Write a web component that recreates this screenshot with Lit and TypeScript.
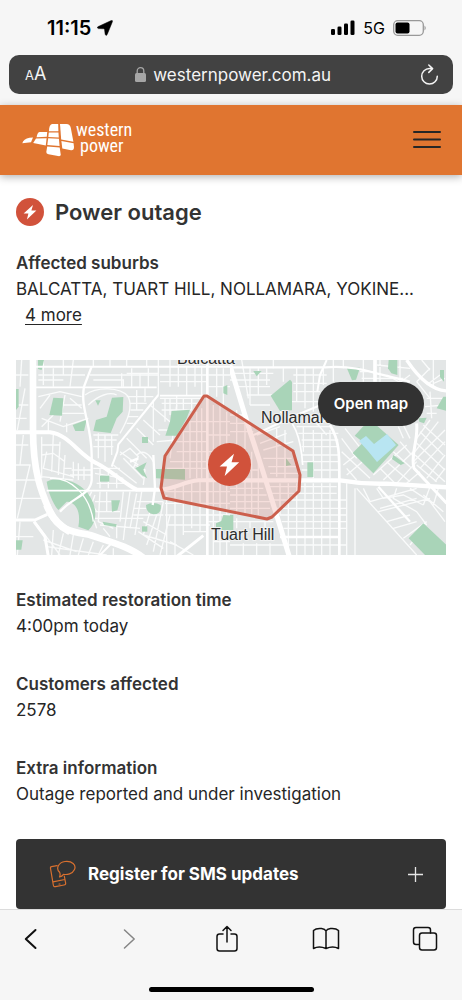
import { LitElement, html, svg, css } from "lit";
import { customElement } from "lit/decorators.js";

const bolt = "M17 7 L7.600 15.400 L12.400 15.400 L10.900 21.500 L20.400 12.500 L15.400 12.500 Z";

/* Street data is kept in two halves, each drawn at a third of its own units. */
type Road = [d: string, width: number];

const westMinor = [
  "M18 60 H55 M18 150 H55 M18 190 H50 M18 270 H55 M18 330 H62 M18 375 H80 M18 430 H95 M35 15 L30 95 M45 100 L22 225 M40 240 L30 330 M60 330 L22 490 M18 545 H70 M30 500 L22 600",
  "M85 60 H225 M100 15 V90 M130 40 V95 M160 15 V60 M190 15 L180 95 M85 75 H160 M85 125 L150 110 L215 125 M90 160 L120 120 M165 120 L150 200 M180 130 L215 160 M160 150 H215 M150 175 H222 M95 190 L160 215 L235 190 M95 215 L130 180 M115 230 V195 M170 232 V205",
  "M240 60 H445 M250 75 L340 75 L340 95 M335 55 V95 M365 40 V95 M390 55 V95 M415 40 V95 M445 15 V120 M350 55 H445 M250 15 V35 M300 15 V35 M350 15 V35 M410 15 V35",
  "M225 120 C260 95 330 95 355 125 C370 160 350 200 330 235 M235 150 C265 120 300 110 320 120 M350 125 H430 M360 145 H410 M362 165 H400 M355 185 H385 M350 205 H370 M380 105 V165 M405 100 V140 M250 240 H325 M255 255 H320 M250 275 H310 M265 235 V310 M285 240 V320 M305 240 V300",
  "M95 245 V370 M95 270 H150 M95 300 L130 295 L165 320 M110 290 L100 340 L190 365 M130 240 L125 350 M150 260 L145 360 M165 300 L160 370 M190 320 V370 M205 325 V375 M222 335 V375 M185 345 H245 M180 360 H245 M95 365 L190 375 M160 340 H185",
  "M250 340 H330 M255 355 L340 370 M260 385 H350 M270 340 V400 M295 345 V400 M320 355 V400 M310 330 L380 385 M340 310 L400 370 M330 290 L385 330 M350 250 L410 310 M380 220 L430 270 M400 195 L450 240 M420 150 L480 200 M430 135 V260 M330 300 L360 280 L385 305 L370 340 M380 300 C400 280 420 300 430 320 M375 330 L405 345 L400 390",
  "M450 130 H575 M455 145 H565 M455 165 H545 M465 130 V200 M480 130 V180 M500 120 V165 M520 130 V165 M545 130 V165 M450 60 H590 M450 80 H590 M480 15 V95 M505 15 V95 M530 35 V120 M555 15 V95 M575 35 V120 M595 60 H660 M595 95 H660 M620 40 V125 M640 40 V150",
  "M445 225 H500 M440 260 L500 255 M500 150 L480 310 M520 230 V370 M540 200 V370 M560 170 V370 M575 160 V370 M500 290 H590 M480 320 H590 M470 340 H590 M500 260 H590 M520 230 H590 M530 200 H590 M610 150 V600 M630 150 V600 M650 170 V600 M595 200 H660 M595 240 H660 M595 290 H660 M595 340 H660",
  "M470 420 V600 M495 400 V600 M520 390 V540 M545 385 V520 M570 380 V530 M465 410 H660 M465 445 H660 M465 480 H660 M470 510 H600 M520 530 H590 M480 560 L550 600 M610 560 H660 M595 500 H660",
  "M255 420 L240 460 L260 520 M270 410 L265 500 L310 520 M290 410 V470 M340 410 L330 500 M360 410 L345 510 M380 415 L360 520 M395 410 L375 540 M255 440 H310 M255 470 H330 M255 490 H400 M270 510 L390 520 M280 520 L300 545 M320 510 V550 M345 510 L340 555 M380 440 H460 M370 460 H410 M370 480 H460 M400 500 L470 540 M385 530 L460 580 M400 540 L500 570 M420 470 L400 540 M440 480 L410 570 M460 440 L430 590 M480 480 L450 600",
  "M75 500 L150 600 M100 555 L200 590 M130 525 L125 600 M160 535 L145 600 M190 540 L180 600 M220 550 L205 600 M250 560 L235 600 M280 570 L265 600 M310 580 V600 M110 575 L290 600 M100 410 V440 M85 395 L100 430 M245 410 L235 430 L260 470",
];

const westMajor: Road[] = [
  ["M68 35 H660", 6],
  ["M70 97 H440 M450 122 H590", 5],
  ["M245 35 L222 95 C210 160 245 210 245 300 V375 C242 420 190 425 150 470", 7],
  ["M445 120 L325 268 L322 290 L305 335", 6],
  ["M110 407 H380", 5],
  ["M120 370 C180 365 240 420 250 500", 4],
  ["M18 495 H75 L112 478", 9],
  ["M72 500 L105 545 L115 605", 9],
  ["M265 605 L310 560", 6],
  ["M500 605 L580 542", 9],
  ["M430 300 L435 400 L428 450 M360 320 L385 310", 7],
  ["M592 15 V605", 8],
  ["M15 232 H120 C180 240 205 300 260 325 C300 345 350 390 380 404 H450 C500 400 520 380 565 376 H665", 12],
  ["M110 450 C130 500 160 520 180 530", 22],
  ["M69 10 V215 C68 360 98 420 122 475 C150 530 200 532 240 540 C300 560 360 575 405 612", 20],
];

const westParks = [
  "M130 128 L160 130 L156 182 L118 180 Z",
  "M306 128 L340 126 L338 170 L320 190 L302 234 L250 228 L258 195 L290 185 Z",
  "M188 210 L230 194 L222 228 L196 228 Z",
  "M485 168 L540 164 L530 190 L500 242 L466 242 L480 200 Z",
  "M110 380 C150 362 215 380 240 425 C262 460 262 500 235 526 L205 515 C215 460 190 440 170 440 L145 465 C125 440 115 410 110 380 Z",
  "M438 342 H525 V374 L438 370 Z",
  "M376 340 L410 322 L400 345 L412 370 L395 360 Z",
  "M396 246 H414 V264 H396 Z",
  "M270 362 H298 V380 H270 Z",
  "M304 436 H330 L322 466 L306 470 Z",
  "M408 450 Q430 438 452 450 Q456 478 430 478 Q408 474 408 450 Z",
  "M278 500 L320 508 L318 516 L282 510 Z",
  "M396 514 H412 V530 H396 Z",
  "M84 15 H102 L95 45 L84 42 Z",
  "M18 102 H26 V155 L18 165 Z",
  "M18 556 H38 L34 584 H18 Z",
  "M640 95 L652 90 V120 L640 115 Z",
  "M256 136 H272 L264 152 Z",
  "M618 505 L634 498 L640 480 L665 482 V525 H618 Z",
];

const eastMinor = [
  "M0 55 H130 M0 75 H120 M20 95 H120 M35 15 L55 130 M60 40 V150 M85 40 V120 M110 40 V90 M130 15 V40 M160 40 V80 M200 40 V140 M225 40 V160 M250 40 V170 M190 60 H290 M190 85 H290 M190 110 H270 M50 120 H130 M60 150 H120 M185 140 H265",
  "M280 40 V90 M310 15 V80 M340 15 V40 M400 15 V80 M450 15 V80 M390 50 H430 M395 70 H520 M440 30 L540 40 M470 60 L560 110 M510 15 V90 M540 60 L500 90 M560 80 L600 130 M600 40 L560 80 M575 15 L600 45 M610 15 V100 M630 60 L590 90 M645 70 L600 90",
  "M590 130 H645 M585 155 L645 150 M590 175 H620 M600 110 L605 190 M580 210 L645 270 M570 230 L640 300 M560 265 L645 345 M555 300 L645 380 M560 330 L620 380 M600 195 L560 250 M625 200 L555 290 M645 225 L550 320 M645 260 L570 340 M645 300 L590 370 M645 340 L615 380",
  "M345 220 L400 290 M335 250 L380 310 M335 290 L420 370 M350 340 L380 375 M450 340 L500 390 M470 320 L540 380 M490 290 L545 340 M510 260 L545 300 M520 210 L540 250 M430 360 L530 270 M460 375 L550 290 M500 385 L560 320 M530 385 L570 350 M340 330 L390 290 M350 360 L410 310 M505 215 L520 250",
  "M200 215 H300 M205 235 H325 M215 255 H325 M215 275 H325 M215 300 H325 M215 320 H325 M215 345 H325 M220 215 V290 M250 225 V370 M275 235 V375 M300 225 V370 M240 180 L290 240 M260 210 L300 190 M80 240 L150 215 M90 265 L170 235 M100 285 L190 260 M100 310 H185 M115 335 H200 M120 355 H205 M140 220 V365 M165 225 V370",
  "M0 180 H40 M0 205 H60 M0 230 H70 M0 345 H85 M0 400 H100 M0 420 H110 M0 440 H120 M0 460 H120 M20 165 V480 M45 180 V480 M65 290 V480 M85 320 V480 M120 395 H320 M120 415 H320 M130 435 H350 M140 460 H350 M150 480 H350 M155 500 H350 M160 520 H350 M170 570 H350",
  "M150 385 V480 M175 385 V600 M200 385 V600 M225 385 V600 M250 385 V600 M275 385 V600 M300 385 V600 M350 385 V600 M375 400 V600 M0 500 H130 M0 570 H170 M20 490 V520 M60 500 V520 M105 500 V520 M40 565 V600 M80 565 V600 M120 565 V600",
  "M380 400 L560 600 M400 400 L420 440 M420 440 L560 400 M445 470 L600 430 M470 500 L540 480 M490 520 L560 500 M440 400 L460 430 L520 420 L580 450 M500 400 L490 430 L560 470 L590 510 M540 400 L600 440 L645 500 M580 420 L640 470 M450 460 L560 430 M520 550 L590 500 M540 570 L580 520 M600 395 L580 450 M625 400 L610 450",
];

const eastMajor: Road[] = [
  ["M0 37 H285 Q360 30 440 55 L540 80", 7],
  ["M290 15 L270 60 L262 110", 6],
  ["M435 15 V80", 11],
  ["M530 15 C560 60 600 105 650 108", 10],
  ["M60 245 L200 180 L320 130", 6],
  ["M150 170 Q210 200 218 330", 5],
  ["M300 210 C330 260 328 300 328 380 V605", 8],
  ["M560 205 C565 260 540 300 552 340 L650 445", 9],
  ["M445 395 L540 500", 7],
  ["M150 546 H325", 8],
  ["M-5 15 L60 230 C90 320 140 480 178 605", 15],
  ["M0 376 H330 Q400 388 470 386 L650 397", 13],
];

const eastParks = [
  "M122 122 L180 74 L186 80 V166 L150 168 Z",
  "M350 38 H390 L378 74 L366 76 Z",
  "M476 15 H502 V60 L484 55 L474 40 Z",
  "M436 208 L506 270 L430 355 L368 294 L400 262 L374 242 L400 214 Z",
  "M490 300 L524 325 L512 330 L486 312 Z",
  "M232 322 H250 V366 H232 Z",
  "M168 310 L184 330 L168 333 Z",
  "M580 505 L650 570 V605 H590 L536 550 Z",
  "M620 160 L640 125 H650 V168 Z",
  "M566 190 L590 188 L582 205 L568 200 Z",
  "M70 48 H95 L80 64 Z",
  "M630 45 H642 V80 L630 66 Z",
  "M0 480 H10 V525 H0 Z",
];

@customElement("outage-map")
export class OutageMap extends LitElement {
  static styles = css`
    :host { display: block; position: relative; overflow: hidden; height: 195px; background: #e3e6e6; }
    .canvas { display: block; width: 100%; height: 100%; }
    .minor { fill: none; stroke: #fafbfb; stroke-width: 4; }
    .major { fill: none; stroke: #fff; stroke-linejoin: round; }
    .park { fill: #a9d4b8; }
    .water { fill: #b8e5f2; }
    .area { fill: #d9543f; fill-opacity: 0.17; stroke: #cc5f4c; stroke-width: 3; stroke-linejoin: round; }
    .name { font-family: "Liberation Sans", Arial, sans-serif; font-size: 16px; fill: #2d2d2d; stroke: #f1f2f2; stroke-width: 2; paint-order: stroke; }
    .marker { fill: #d1523b; }
    .bolt { fill: #fff; }
    .open {
      position: absolute; top: 22px; right: 22px; height: 44px; padding: 0 16px;
      border: 0; border-radius: 22px; background: #323232; color: #fff;
      font: 600 15px/44px Inter, sans-serif; cursor: pointer;
    }
  `;

  private half(shift: number, minor: string[], major: Road[], parks: string[]) {
    return svg`<g transform="translate(${shift} -5) scale(0.33333)">
      ${minor.map((d) => svg`<path class="minor" d=${d}></path>`)}
      ${parks.map((d) => svg`<path class="park" d=${d}></path>`)}
      ${major.map(([d, w]) => svg`<path class="major" stroke-width=${w} d=${d}></path>`)}
    </g>`;
  }

  render() {
    return html`
      <svg class="canvas" viewBox="0 0 430 195" preserveAspectRatio="xMidYMid slice" role="img" aria-label="Outage area">
        <defs>
          <clipPath id="west"><rect x="0" y="0" width="214" height="195"></rect></clipPath>
          <clipPath id="east"><rect x="214" y="0" width="216" height="195"></rect></clipPath>
        </defs>
        <g clip-path="url(#west)">${this.half(-6, westMinor, westMajor, westParks)}</g>
        <g clip-path="url(#east)">
          ${this.half(214, eastMinor, eastMajor, eastParks)}
          <path class="water" d="M343 81 L350 76 L358 84 L371 74 L380 85 L361 102 L352 91 Z"></path>
        </g>
        <text class="name" x="161" y="4">Balcatta</text>
        <text class="name" x="245" y="63">Nollamara</text>
        <text class="name" x="195" y="180">Tuart Hill</text>
        <path class="area" d="M188 36 H191 L277 91 L284 115 L283 131 L256 157 L251 159 L148 138 L145 128 L149 96 Z"></path>
        <circle class="marker" cx="213.500" cy="104.500" r="21.500"></circle>
        <path class="bolt" transform="translate(192 83) scale(1.53)" d=${bolt}></path>
      </svg>
      <button class="open" type="button">Open map</button>
    `;
  }
}

@customElement("app-root")
export class AppRoot extends LitElement {
  static styles = css`
    :host { display: flex; flex-direction: column; min-height: 100vh; background: #fff; color: #262626; font-family: Inter, sans-serif; }
    * { box-sizing: border-box; }
    svg { display: block; flex: none; }
    button { font-family: inherit; border: 0; padding: 0; background: none; color: inherit; cursor: pointer; }
    .chrome { background: #f6f6f6; padding-bottom: 11px; }
    .status { display: flex; justify-content: space-between; align-items: center; height: 55px; padding: 0 35px 0 47px; color: #000; }
    .clock { display: flex; align-items: center; gap: 6px; font-size: 20px; font-weight: 600; line-height: 24px; }
    .signals { display: flex; align-items: center; gap: 8px; font-size: 16px; line-height: 20px; }
    .address { display: flex; align-items: center; justify-content: space-between; height: 39px; margin: 0 9px; padding: 0 14px 0 16px; border-radius: 10px; background: #424242; color: #f4f4f4; }
    .text-size { font-size: 18px; line-height: 24px; }
    .small { font-size: 13px; }
    .site { display: flex; align-items: center; gap: 7px; font-size: 17px; line-height: 24px; }
    .brand { display: flex; align-items: center; justify-content: space-between; height: 70px; padding: 0 20px 0 22px; background: #e07530; box-shadow: 0 2px 8px rgba(0, 0, 0, 0.3); z-index: 1; }
    .logo { display: flex; align-items: center; gap: 2px; color: #fff; text-decoration: none; }
    .wordmark { display: flex; flex-direction: column; font: 400 18px/16px "Liberation Sans Narrow", "Roboto Condensed", Roboto, sans-serif; padding-bottom: 4px; }
    .indent { padding-left: 4px; }
    main { display: flex; flex-direction: column; flex: 1; padding: 23px 16px 0; gap: 32px; }
    .intro { display: flex; flex-direction: column; gap: 24px; }
    .title { display: flex; align-items: center; gap: 11px; height: 28px; }
    h1 { margin: 0; font-size: 22px; line-height: 28px; font-weight: 600; color: #333; }
    h2 { margin: 0; font-size: 17px; line-height: 26px; font-weight: 600; color: #333; }
    p { margin: 0; font-size: 17px; line-height: 26px; }
    .more { margin-left: 9px; font-size: 17px; line-height: 26px; color: inherit; text-decoration: underline; text-underline-offset: 3px; }
    .register { display: flex; align-items: center; gap: 12px; width: 100%; height: 70px; padding: 0 22px 0 33px; border-radius: 4px; background: #333; color: #fff; font-size: 17px; font-weight: 700; }
    .register span { flex: 1; text-align: left; }
    .toolbar { display: flex; flex-direction: column; justify-content: space-between; align-items: center; height: 91px; padding-bottom: 8px; border-top: 1px solid #dcdcdc; background: #f6f6f6; color: #111; }
    .tools { display: flex; justify-content: space-between; align-items: center; align-self: stretch; height: 58px; padding: 0 24px 0 18px; }
    .home { width: 165px; height: 5px; border-radius: 3px; background: #000; }
    .line { fill: none; stroke: currentColor; stroke-width: 2; stroke-linecap: round; stroke-linejoin: round; }
    .thin { stroke-width: 1.5; }
    .muted { color: #858585; }
    .orange { color: #d8702f; stroke-width: 1.2; }
  `;

  render() {
    return html`
      <div class="chrome">
        <div class="status">
          <div class="clock">
            11:15
            <svg width="16" height="16" viewBox="0 0 16 16"><path d="M14.200 0.600 Q15.900 0 15.400 1.700 L10.200 14.500 Q9.200 16.300 8.200 14.600 L7.500 9.200 Q7.300 8.800 6.900 8.800 L1.400 8.600 Q-0.600 7.800 0.900 6.700 Z" fill="#000" stroke="#000" stroke-width="0.500"></path></svg>
          </div>
          <div class="signals">
            <svg width="24" height="16" viewBox="0 0 24 16"><rect x="0" y="9" width="4" height="6" rx="1.300"></rect><rect x="6.500" y="6.500" width="4" height="8.500" rx="1.300"></rect><rect x="13" y="3.500" width="4" height="11.500" rx="1.300"></rect><rect x="19.500" y="0.500" width="4" height="14.500" rx="1.300"></rect></svg>
            5G
            <svg width="34" height="16" viewBox="0 0 34 16"><rect x="0.700" y="0.700" width="29.600" height="14.600" rx="4" fill="none" stroke="#999" stroke-width="1.300"></rect><rect x="2.500" y="2.500" width="14" height="11" rx="2" fill="#000"></rect><path d="M31.500 5.500 Q34 8 31.500 10.500 Z" fill="#999"></path></svg>
          </div>
        </div>
        <div class="address">
          <button class="text-size" type="button" aria-label="Text size"><span class="small">A</span>A</button>
          <div class="site">
            <svg width="11" height="15" viewBox="0 0 11 15"><rect x="0" y="6" width="11" height="9" rx="1.500" fill="#a6a6a6"></rect><path d="M2.200 7 V4 A3.300 3.300 0 0 1 8.800 4 V7" fill="none" stroke="#a6a6a6" stroke-width="1.300"></path></svg>
            westernpower.com.au
          </div>
          <button type="button" aria-label="Reload">
            <svg class="line thin" width="19" height="22" viewBox="0 0 19 22"><path d="M9.500 4.500 A7.800 7.800 0 1 0 17.300 12.300 M9.500 4.500 H12 M8.800 1 L12.600 4.600 L8.800 8.400"></path></svg>
          </button>
        </div>
      </div>

      <header class="brand">
        <a class="logo" href="#" aria-label="Western Power">
          <svg width="52" height="34" viewBox="0 0 52 34" fill="#fff">
            <path d="M7.500 14.800 L11 14.600 L9 19.300 L0.300 20.200 Q1.500 16 7.500 14.800 Z"></path>
            <path d="M17.500 9 L25.200 9 L24.800 13.800 L14.600 14.200 Q15.200 9.800 17.500 9 Z"></path>
            <path d="M14 15.500 L24.600 15.200 L23.800 22.500 L11.200 20 Z"></path>
            <path d="M30 1 H36.200 L36.400 8.200 H26.900 Q27.200 1.500 30 1 Z"></path>
            <path d="M26.800 9.400 H36.500 L36.800 14.400 L26.300 14 Z"></path>
            <path d="M26.200 15.200 L36.900 15.700 L37.600 23 L25.300 22 Z"></path>
            <path d="M25.200 23.400 L37.700 24.500 L38.800 32 Q38.400 33.500 36 33 L26.500 31.300 Q24.200 30.800 24.300 29 Z"></path>
            <path d="M38 1 H44.500 Q48 1.200 48.800 5 L51.400 18.800 L39.200 16.500 Z"></path>
            <path d="M39.400 17.900 L51.600 20.300 L52 24 Q52 27.500 49 27.200 L40.300 25.600 Z"></path>
          </svg>
          <span class="wordmark"><span>western</span><span class="indent">power</span></span>
        </a>
        <button type="button" aria-label="Menu">
          <svg width="30" height="20" viewBox="0 0 30 20"><path class="line" stroke="#1c1009" d="M2 2 H28 M2 9.500 H28 M2 17 H28"></path></svg>
        </button>
      </header>

      <main>
        <div class="intro">
          <div class="title">
            <svg width="28" height="28" viewBox="0 0 28 28"><circle cx="14" cy="14" r="14" fill="#d1523b"></circle><path d=${bolt} fill="#fff"></path></svg>
            <h1>Power outage</h1>
          </div>
          <section>
            <h2>Affected suburbs</h2>
            <p>BALCATTA, TUART HILL, NOLLAMARA, YOKINE...</p>
            <button class="more" type="button">4 more</button>
          </section>
        </div>
        <outage-map></outage-map>
        <section><h2>Estimated restoration time</h2><p>4:00pm today</p></section>
        <section><h2>Customers affected</h2><p>2578</p></section>
        <section><h2>Extra information</h2><p>Outage reported and under investigation</p></section>
        <button class="register" type="button">
          <svg class="line orange" width="27" height="28" viewBox="0 0 27 28"><path d="M8 5.700 L2.500 6.700 Q1.200 7 1.500 8.300 L4.300 25 Q4.600 27 6.500 26.600 L15 25 Q17 24.700 16.600 23 L15.300 16 M4 21.800 L15.800 19.500 M10 24 H11 M10.500 17 C11.500 15 11.300 13.800 10.600 12.300 C6.500 8.500 9.500 2.500 16 1.500 C23 0.600 27.500 5 25.500 9.500 C23.500 14 18 15 14.500 14.300 C13.500 15.700 12.300 16.600 10.500 17 Z"></path></svg>
          <span>Register for SMS updates</span>
          <svg width="17" height="17" viewBox="0 0 17 17"><path d="M8.500 1 V16 M1 8.500 H16" stroke="#e6e6e6" stroke-width="1.300"></path></svg>
        </button>
      </main>

      <footer class="toolbar">
        <nav class="tools" aria-label="Browser">
          <button type="button" aria-label="Back"><svg class="line" width="26" height="26" viewBox="0 0 26 26"><path d="M17.500 4 L7.800 13 L17.500 22"></path></svg></button>
          <button class="muted" type="button" aria-label="Forward"><svg class="line thin" width="26" height="26" viewBox="0 0 26 26"><path d="M8.500 4 L18.200 13 L8.500 22"></path></svg></button>
          <button type="button" aria-label="Share"><svg class="line thin" width="26" height="28" viewBox="0 0 26 28"><path d="M9 9 H5.500 Q3 9 3 11.500 V23.500 Q3 26 5.500 26 H20.500 Q23 26 23 23.500 V11.500 Q23 9 20.500 9 H17 M13 17 V1.500 M9 5.500 L13 1.500 L17 5.500"></path></svg></button>
          <button type="button" aria-label="Bookmarks"><svg class="line thin" width="28" height="24" viewBox="0 0 28 24"><path d="M14 4 Q13 2 9.500 1.500 Q4 1 1.500 3.500 V21.500 Q7 18.500 14 21.500 Q21 18.500 26.500 21.500 V3.500 Q24 1 18.500 1.500 Q15 2 14 4 V21.500"></path></svg></button>
          <button type="button" aria-label="Tabs"><svg class="line thin" width="26" height="26" viewBox="0 0 26 26"><path d="M7 18.500 H4 Q1.500 18.500 1.500 16 V4 Q1.500 1.500 4 1.500 H16 Q18.500 1.500 18.500 4 V7"></path><rect x="7.500" y="7" width="17" height="17" rx="2.500"></rect></svg></button>
        </nav>
        <div class="home"></div>
      </footer>
    `;
  }
}
